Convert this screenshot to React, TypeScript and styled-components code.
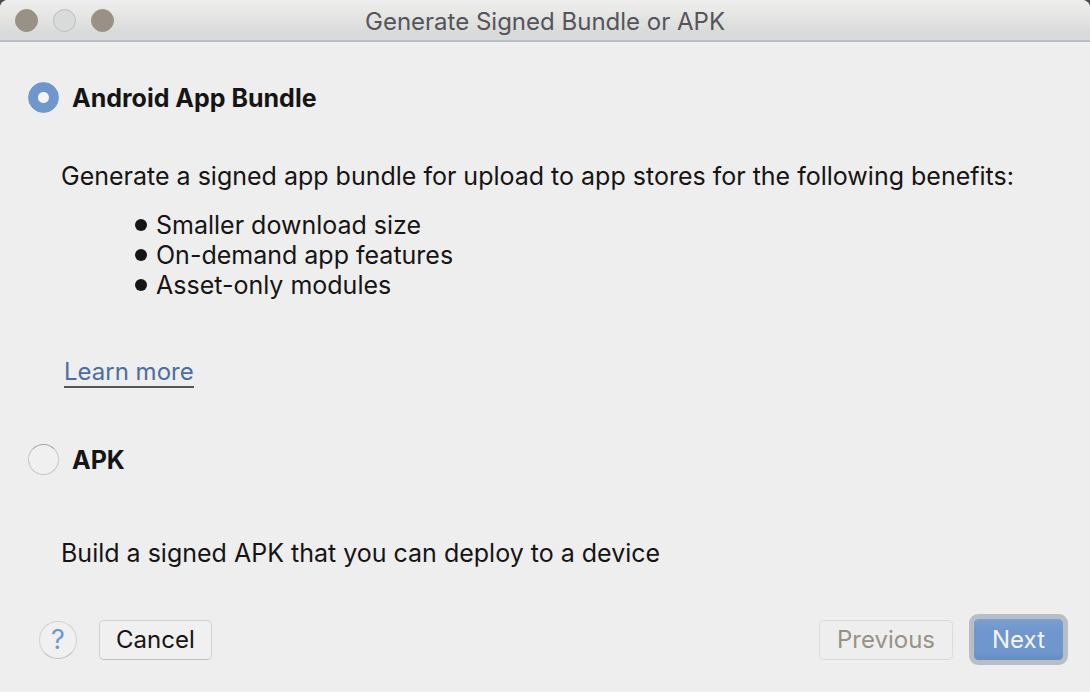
import React, { useState } from "react";
import styled, { createGlobalStyle } from "styled-components";

const GlobalStyle = createGlobalStyle`
  *, *::before, *::after { box-sizing: border-box; }
  html, body, #root { height: 100%; }
  body {
    margin: 0;
    background: #4a4a55;
    font-family: Inter, "Liberation Sans", sans-serif;
    font-size: 25px;
    line-height: 30px;
    color: #161415;
  }
`;

const Dialog = styled.form`
  display: flex;
  flex-direction: column;
  min-height: 100%;
  background: #eeeeee;
  border-radius: 8px 8px 0 0;
  border-bottom: 2px solid #f0f0f0;
`;

const TitleBar = styled.header`
  display: grid;
  grid-template-columns: 1fr auto 1fr;
  align-items: center;
  height: 42px;
  padding: 0 15px;
  border-bottom: 2px solid #b8bec6;
  border-radius: 8px 8px 0 0;
  background: linear-gradient(#eeeeee 0, #e9e9e7 10px, #d9dbda 32px);
`;

const WindowControls = styled.div`
  display: flex;
  gap: 15px;
`;

const WindowButton = styled.button<{ $off?: boolean }>`
  width: 23px;
  height: 23px;
  padding: 0;
  border-radius: 50%;
  border: 1px solid ${(p) => (p.$off ? "#b8bec6" : "#999185")};
  background: ${(p) => (p.$off ? "#d9dbda" : "#999185")};
`;

const Title = styled.h1`
  margin: 0;
  padding-top: 4px;
  font-size: 24px;
  font-weight: 400;
  color: #55545a;
`;

const Content = styled.main`
  flex: 1;
  padding: 40px 28px 0;
`;

const Option = styled.section`
  & + & { margin-top: 56px; }
`;

const OptionLabel = styled.label`
  display: flex;
  align-items: center;
  gap: 13px;
  font-weight: 700;
`;

const Radio = styled.input`
  appearance: none;
  width: 31px;
  height: 31px;
  margin: 0;
  border: 1px solid #c4c8cb;
  border-top-color: #a2a5a8;
  border-radius: 50%;
  background: #f0f0f0;
  &:checked {
    border-color: #6f97cd;
    background: radial-gradient(circle, #f4f4f4 5px, #6f97cd 6px);
  }
`;

const Description = styled.p<{ $space: number }>`
  margin: ${(p) => p.$space}px 0 0 33px;
`;

const Benefits = styled.ul`
  margin: 19px 0 56px 107px;
  padding: 0;
  list-style: none;
`;

const Benefit = styled.li`
  display: flex;
  align-items: center;
  gap: 9px;
  &::before {
    content: "";
    width: 12px;
    height: 12px;
    border-radius: 50%;
    background: #161415;
  }
`;

const Link = styled.a`
  display: inline-block;
  margin-left: 36px;
  border-bottom: 2px solid #55545a;
  font-size: 24px;
  line-height: 28px;
  color: #4c6da0;
  text-decoration: none;
`;

const Footer = styled.footer`
  display: flex;
  align-items: center;
  justify-content: space-between;
  padding: 0 22px 25px 39px;
`;

const ButtonGroup = styled.div<{ $gap: number }>`
  display: flex;
  align-items: center;
  gap: ${(p) => p.$gap}px;
`;

const Button = styled.button`
  height: 40px;
  padding: 0 16px;
  border: 1px solid #cfd1d2;
  border-bottom-color: #b8bec6;
  border-radius: 5px;
  background: #f0f0f0;
  font: inherit;
  font-size: 24px;
  color: #161415;
  &:disabled {
    padding: 0 17px;
    border-color: #d9dbda;
    background: #eeeeee;
    color: #999185;
  }
`;

const PrimaryButton = styled(Button)`
  height: 51px;
  padding: 0 18px;
  border: 5px solid #b8bec6;
  border-radius: 9px;
  background: linear-gradient(#7ca0d0, #6f97cd 12px, #6f97cd 34px, #668cc0);
  background-clip: padding-box;
  background-color: #b8bec6;
  color: #f4f4f4;
`;

const HelpButton = styled(Button)`
  width: 38px;
  height: 38px;
  padding: 0;
  border-radius: 50%;
  font-size: 27px;
  color: #6f97cd;
`;

const benefits = ["Smaller download size", "On-demand app features", "Asset-only modules"];

export default function App() {
  const [format, setFormat] = useState("bundle");
  return (
    <>
      <GlobalStyle />
      <Dialog onSubmit={(e: React.FormEvent) => e.preventDefault()}>
        <TitleBar>
          <WindowControls>
            <WindowButton type="button" aria-label="Close" />
            <WindowButton type="button" aria-label="Minimize" $off />
            <WindowButton type="button" aria-label="Zoom" />
          </WindowControls>
          <Title>Generate Signed Bundle or APK</Title>
        </TitleBar>
        <Content>
          <Option>
            <OptionLabel>
              <Radio type="radio" name="format" checked={format === "bundle"} onChange={() => setFormat("bundle")} />
              Android App Bundle
            </OptionLabel>
            <Description $space={48}>
              Generate a signed app bundle for upload to app stores for the following benefits:
            </Description>
            <Benefits>
              {benefits.map((b) => (
                <Benefit key={b}>{b}</Benefit>
              ))}
            </Benefits>
            <Link href="#learn-more">Learn more</Link>
          </Option>
          <Option>
            <OptionLabel>
              <Radio type="radio" name="format" checked={format === "apk"} onChange={() => setFormat("apk")} />
              APK
            </OptionLabel>
            <Description $space={63}>Build a signed APK that you can deploy to a device</Description>
          </Option>
        </Content>
        <Footer>
          <ButtonGroup $gap={22}>
            <HelpButton type="button" aria-label="Help">?</HelpButton>
            <Button type="button">Cancel</Button>
          </ButtonGroup>
          <ButtonGroup $gap={16}>
            <Button type="button" disabled>Previous</Button>
            <PrimaryButton type="submit">Next</PrimaryButton>
          </ButtonGroup>
        </Footer>
      </Dialog>
    </>
  );
}
